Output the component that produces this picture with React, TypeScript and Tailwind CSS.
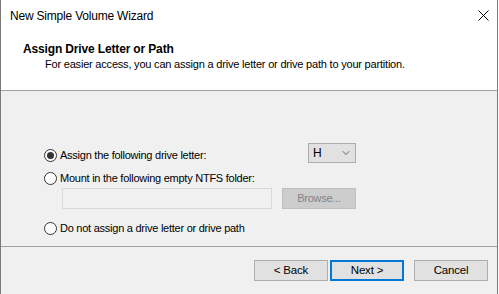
import { ChevronDown } from "lucide-react";

function Radio({ checked }: { checked?: boolean }) {
  return (
    <span className="flex h-[13px] w-[13px] shrink-0 items-center justify-center rounded-full border border-[#333333] bg-white">
      {checked && <span className="h-[7px] w-[7px] rounded-full bg-[#333333]" />}
    </span>
  );
}

function WizButton({ label, primary }: { label: string; primary?: boolean }) {
  return (
    <button
      className={
        primary
          ? "flex h-[21px] w-[74px] items-center justify-center border-2 border-[#0078d7] bg-[#e1e1e1] text-[11.5px] tracking-[-0.2px] text-black"
          : "flex h-[21px] w-[74px] items-center justify-center border border-[#adadad] bg-[#e1e1e1] text-[11.5px] tracking-[-0.2px] text-black"
      }
    >
      {label}
    </button>
  );
}

export default function App() {
  return (
    <div
      className="h-[294px] w-[499px] bg-white"
      style={{ fontFamily: '"Liberation Sans", Arial, sans-serif' }}
    >
      <div className="flex h-[294px] w-[498px] flex-col border-x border-[#7a7a7a] bg-white">
        {/* title bar */}
        <div className="flex h-[31px] items-center justify-between pl-[9px] pr-[8px]">
          <span className="text-[12px] tracking-[-0.2px] text-black">New Simple Volume Wizard</span>
          <svg width="11" height="11" viewBox="0 0 11 11">
            <path d="M0.5 0.5 L10.5 10.5 M10.5 0.5 L0.5 10.5" stroke="#000" strokeWidth="1" />
          </svg>
        </div>

        {/* header */}
        <div className="flex h-[59px] flex-col pt-[10px]">
          <div className="pl-[22px] text-[12px] font-bold leading-[16px] tracking-[-0.15px] text-black">
            Assign Drive Letter or Path
          </div>
          <div className="pl-[44px] text-[11px] leading-[15px] tracking-[-0.2px] text-black">
            For easier access, you can assign a drive letter or drive path to your partition.
          </div>
        </div>
        <div className="h-px bg-[#a0a0a0]" />

        {/* body */}
        <div className="flex h-[155px] flex-col bg-[#f0f0f0] pl-[43px] pt-[52px] text-[11px] tracking-[-0.25px]">
          <div className="flex h-[20px] items-start">
            <div className="mt-[5px] flex h-[14px] items-center">
              <Radio checked />
              <span className="ml-[3px] text-black">Assign the following drive letter:</span>
            </div>
            <div className="ml-auto mr-[141px] flex h-[20px] w-[48px] items-center justify-between border border-[#adadad] bg-[#e1e1e1] pl-[4px] pr-[3px]">
              <span className="text-[12px] text-black">H</span>
              <ChevronDown size={12} strokeWidth={1.3} className="text-[#222]" />
            </div>
          </div>
          <div className="mt-[8px] flex h-[14px] items-center">
            <Radio />
            <span className="ml-[3px] text-black">Mount in the following empty NTFS folder:</span>
          </div>
          <div className="mt-[3px] flex items-center pl-[18px]">
            <div className="h-[21px] w-[210px] border border-[#d9d9d9] bg-[#f0f0f0]" />
            <div className="ml-[10px] flex h-[21px] w-[74px] items-center justify-center border border-[#bfbfbf] bg-[#cccccc] text-[#838383]">
              Browse...
            </div>
          </div>
          <div className="mt-[12px] flex h-[14px] items-center">
            <Radio />
            <span className="ml-[3px] text-black">Do not assign a drive letter or drive path</span>
          </div>
        </div>
        <div className="h-px bg-[#a0a0a0]" />

        {/* footer */}
        <div className="flex flex-1 items-start bg-[#f0f0f0] pl-[253px] pt-[13px]">
          <WizButton label="< Back" />
          <div className="ml-[2px]">
            <WizButton label="Next >" primary />
          </div>
          <div className="ml-[10px]">
            <WizButton label="Cancel" />
          </div>
        </div>
      </div>
    </div>
  );
}
